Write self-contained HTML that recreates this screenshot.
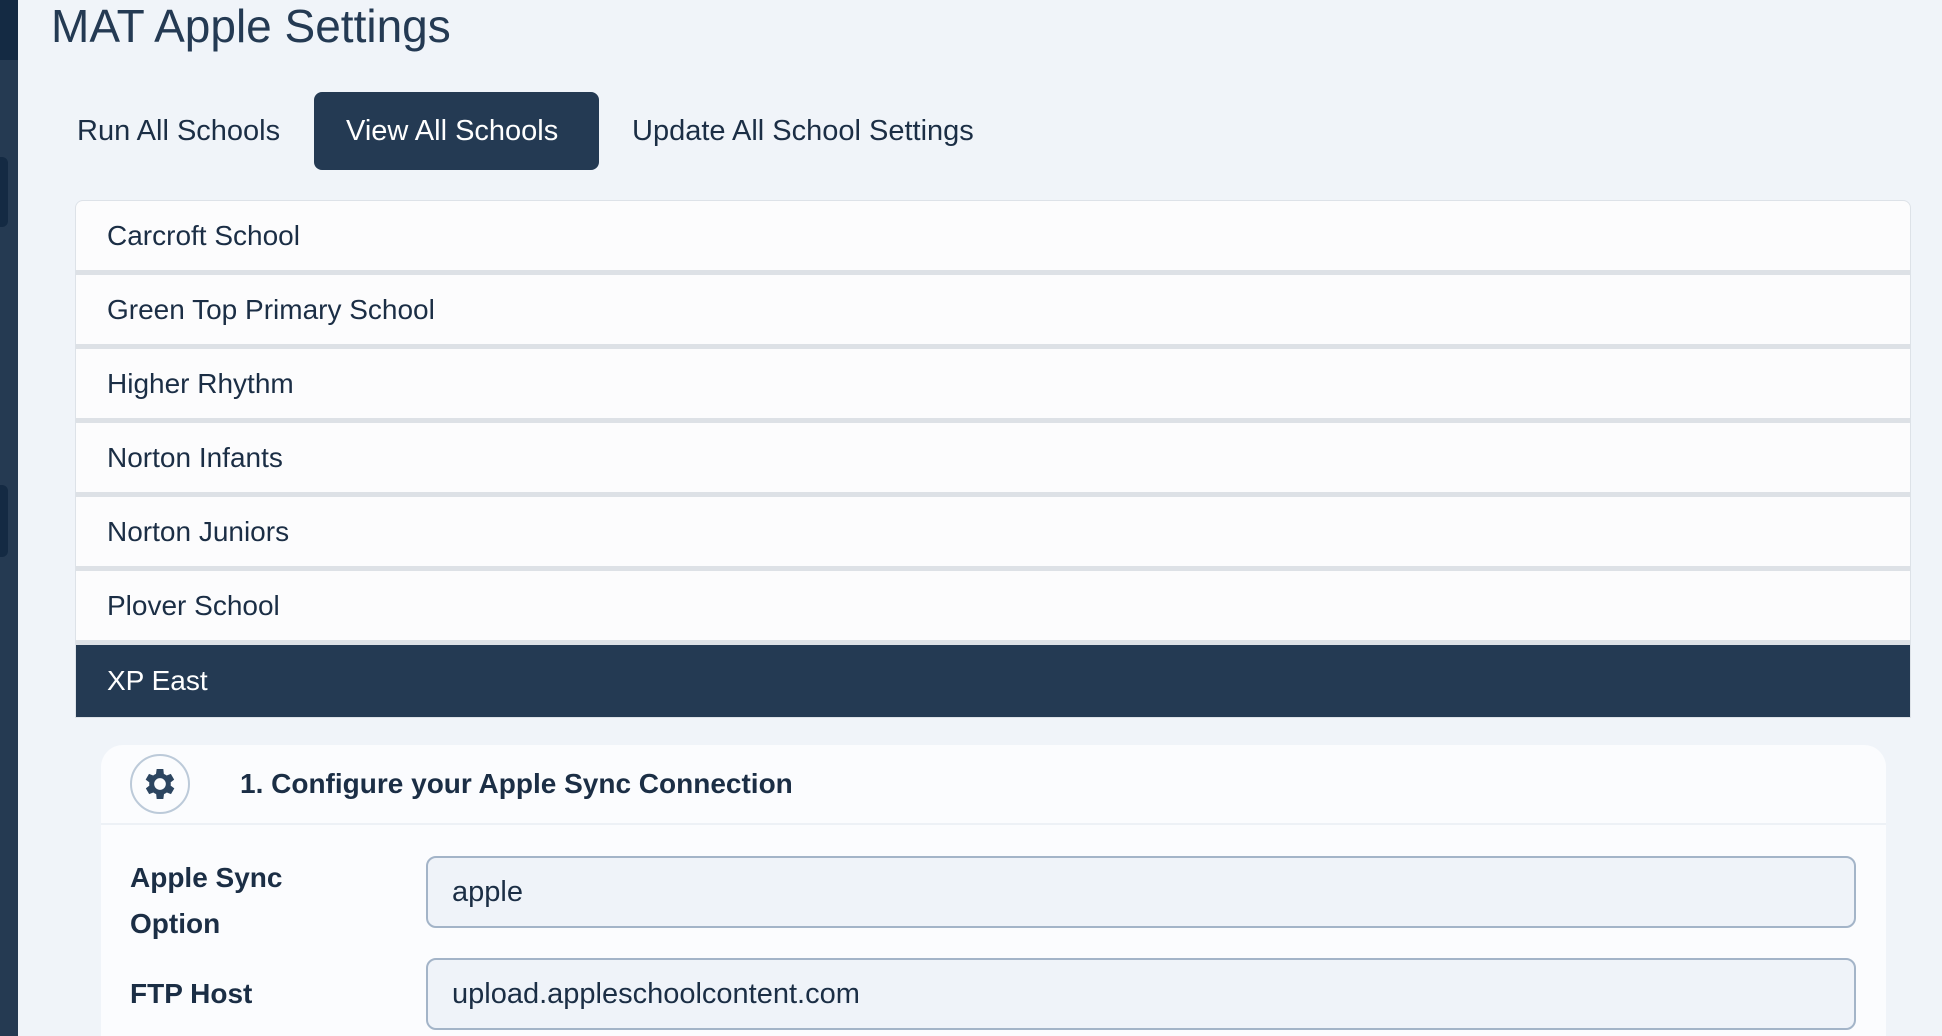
<!DOCTYPE html>
<html style="overflow:hidden;height:1036px"><head><meta charset="utf-8"><style>
*{box-sizing:border-box;margin:0;padding:0}
body{width:1942px;height:1036px;overflow:hidden;background:#f0f4f9;font-family:"Liberation Sans",sans-serif;color:#1b2e45;position:relative}
.side{position:absolute;left:0;top:0;width:18px;height:1036px;background:#253a52}
.side .top{position:absolute;left:0;top:0;width:18px;height:60px;background:#142a43}
.side .t{position:absolute;left:0;width:8px;background:#142a43;border-radius:0 6px 6px 0}
h1{position:absolute;left:51px;top:0;font-size:46px;font-weight:400;line-height:52px;color:#243a53}
.tab{position:absolute;top:92px;height:78px;line-height:78px;font-size:29px;color:#1b2e45}
.tab.on{background:#243a53;color:#fff;border-radius:8px;padding:0 32px;left:314px;width:285px}
.list{position:absolute;left:75px;top:200px;width:1836px;border:1px solid #dde2e8;border-radius:8px 8px 0 0;overflow:hidden;background:#dde1e6}
.row{height:69px;line-height:69px;background:#fcfcfd;padding-left:31px;font-size:28px;margin-bottom:5px}
.row.on{background:#243a53;color:#fff;margin-bottom:0;height:72px;line-height:72px}
.card{position:absolute;left:101px;top:745px;width:1785px;height:291px;background:#fbfcfe;border-radius:22px 22px 0 0}
.hdr{height:80px;border-bottom:2px solid #edf1f6;position:relative}
.gear{position:absolute;left:29px;top:9px;width:60px;height:60px;border:2px solid #bccad9;border-radius:50%;display:flex;align-items:center;justify-content:center}
.htxt{position:absolute;left:139px;top:0;line-height:78px;font-size:28px;font-weight:700}
.lab{position:absolute;left:29px;font-size:28px;font-weight:700;line-height:46px}
.inp{position:absolute;left:325px;width:1430px;height:72px;border:2px solid #a3b4c8;border-radius:10px;background:#eff3f9;font-size:29px;line-height:68px;padding-left:24px}
</style></head><body>
<div class="side"><div class="top"></div><div class="t" style="top:157px;height:70px"></div><div class="t" style="top:485px;height:72px"></div></div>
<h1>MAT Apple Settings</h1>
<div class="tab" style="left:77px">Run All Schools</div>
<div class="tab on">View All Schools</div>
<div class="tab" style="left:632px">Update All School Settings</div>
<div class="list">
<div class="row">Carcroft School</div>
<div class="row">Green Top Primary School</div>
<div class="row">Higher Rhythm</div>
<div class="row">Norton Infants</div>
<div class="row">Norton Juniors</div>
<div class="row">Plover School</div>
<div class="row on">XP East</div>
</div>
<div class="card">
<div class="hdr"><div class="gear"><svg width="40" height="40" viewBox="0 0 24 24"><path fill="#2c4560" d="M19.4 13a7.5 7.5 0 0 0 0-2l2.1-1.6-2-3.5-2.5 1a7 7 0 0 0-1.7-1L15 3h-4l-.4 2.9a7 7 0 0 0-1.7 1l-2.5-1-2 3.5L6.6 11a7.5 7.5 0 0 0 0 2l-2.1 1.6 2 3.5 2.5-1a7 7 0 0 0 1.7 1L11 21h4l.4-2.9a7 7 0 0 0 1.7-1l2.5 1 2-3.5zM13 15.5a3.5 3.5 0 1 1 0-7 3.5 3.5 0 0 1 0 7z" transform="translate(-1 0)"/></svg></div><div class="htxt">1. Configure your Apple Sync Connection</div></div>
<div class="lab" style="top:110px">Apple Sync<br>Option</div>
<div class="inp" style="top:111px">apple</div>
<div class="lab" style="top:226px">FTP Host</div>
<div class="inp" style="top:213px">upload.appleschoolcontent.com</div>
</div>
</body></html>
